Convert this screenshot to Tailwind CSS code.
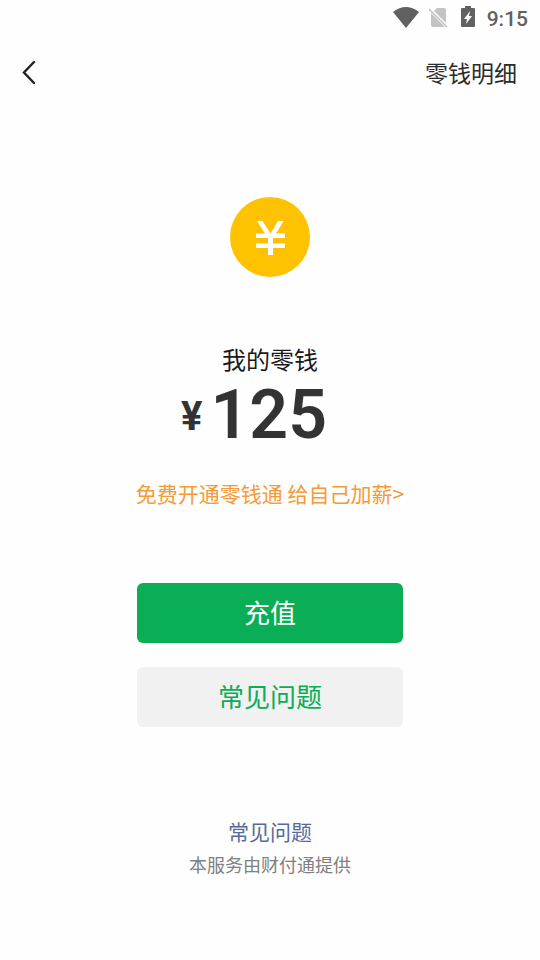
<!DOCTYPE html>
<html lang="zh-CN">
<head>
<meta charset="utf-8">
<meta name="viewport" content="width=device-width, initial-scale=1">
<title>我的零钱</title>
<script src="https://cdn.jsdelivr.net/npm/@tailwindcss/browser@4"></script>
</head>
<body class="min-h-screen bg-[#fefefe] font-['Noto_Sans_CJK_SC',sans-serif] text-[#1a1a1a]">
<div class="flex h-9 items-center justify-end pr-3 text-[#616161]">
  <svg class="mr-2 h-6 w-7" viewBox="0 0 28 24" aria-hidden="true"><path d="M0 6Q13-4 26 6L13 22Z" fill="currentColor"/></svg>
  <svg class="mr-3 h-6 w-5" viewBox="0 0 20 24" aria-hidden="true"><path d="M8 2H15Q17 2 17 4V17L5 5ZM2 7L16 21H4Q2 21 2 19Z" fill="#c4c4c4"/><path d="M0 3L18 21" stroke="#c4c4c4" stroke-width="1.6"/></svg>
  <svg class="mr-3 h-6 w-3.5" viewBox="0 0 14 24" aria-hidden="true"><path d="M4 0H10V2H13Q14 2 14 3V20Q14 21 13 21H1Q0 21 0 20V3Q0 2 1 2H4Z" fill="currentColor"/><path d="M9 5L3 13H6L5 18L11 10H8Z" fill="#fff"/></svg>
  <span class="pt-px font-[Roboto,sans-serif] text-[21px] leading-6 font-medium">9:15</span>
</div>
<header class="flex h-[72px] items-center justify-between pr-[23px] pl-5">
  <button type="button" aria-label="返回" class="flex h-8 w-5 items-center">
    <svg class="h-6 w-5" viewBox="0 0 20 24" fill="none" stroke="#222" stroke-width="2.400" stroke-linecap="round" aria-hidden="true"><path d="M14 2L4 12.500L14 23"/></svg>
  </button>
  <a href="#" class="text-[23px] leading-8 text-[#2b2b2b]">零钱明细</a>
</header>
<main class="flex flex-col items-center">
  <svg class="mt-[89px] size-20" viewBox="0 0 80 80" aria-hidden="true"><circle cx="40" cy="40" r="40" fill="#ffc200"/><path d="M27 24H32.500L40.500 36.500L48 24H53.500L46 36.500H55V41H43V46.500H55V51H43V58H38V51H26V46.500H38V41H26V36.500H35Z" fill="#fff"/></svg>
  <h1 class="mt-16 text-2xl leading-9">我的零钱</h1>
  <p class="flex items-center gap-2 pr-8 font-[Roboto,sans-serif] font-semibold text-[#333]">
    <span class="pt-1 text-[40px] leading-12 font-bold">¥</span><span class="text-[68px] leading-[76px]">125</span>
  </p>
  <a href="#" class="mt-6 text-[21px] leading-8 text-[#f59a35]">免费开通零钱通 给自己加薪&gt;</a>
  <div class="mt-[74px] flex w-[266px] flex-col gap-6 text-[26px]">
    <button type="button" class="h-15 rounded-md bg-[#09ae57] pb-1 text-white">充值</button>
    <button type="button" class="h-15 rounded-md bg-[#f1f1f1] pb-1 text-[#09ae57]">常见问题</button>
  </div>
  <a href="#" class="mt-[88px] text-[21px] leading-8 text-[#576b9b]">常见问题</a>
  <p class="text-lg leading-[34px] text-[#808080]">本服务由财付通提供</p>
</main>
</body>
</html>
